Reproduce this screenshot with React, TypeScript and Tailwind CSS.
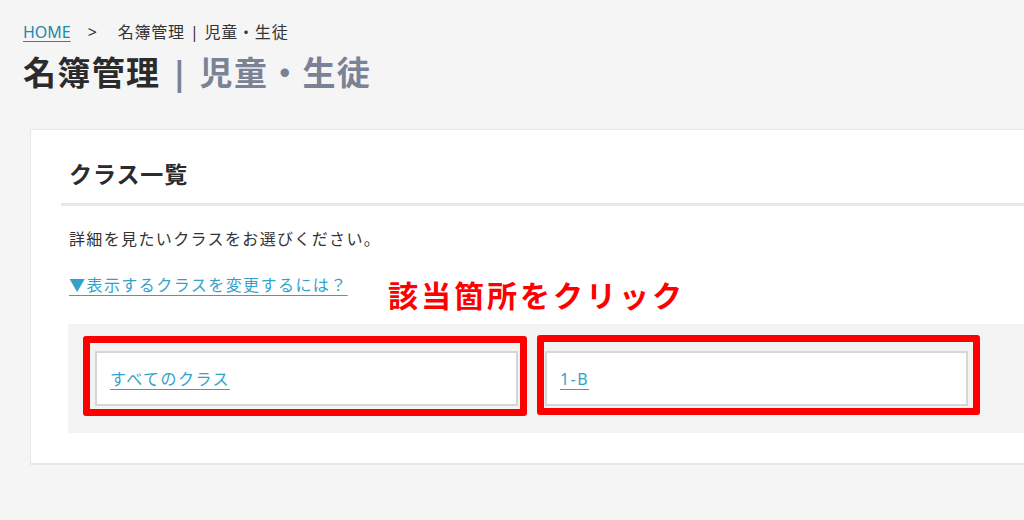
import React from "react";

const classes = ["すべてのクラス", "1-B"];

export default function App() {
    return (
        <div
            className="relative w-full h-[520px] overflow-hidden bg-[#f5f5f5] text-[#333]"
            style={{ fontFamily: '"Noto Sans", "Noto Sans CJK JP", sans-serif' }}
        >
            {/* breadcrumb + title */}
            <div className="pl-[23px] pt-[20px]">
                <div className="flex items-center text-[16px] leading-[24px] tracking-[0.05em]">
                    <a href="#" className="text-[#1c88ad] underline underline-offset-[3px] tracking-normal">HOME</a>
                    <span className="ml-[17px] text-[#333]">&gt;</span>
                    <span className="ml-[20px]">名簿管理 | 児童・生徒</span>
                </div>
                <h1 className="mt-[5px] text-[33px] leading-[48px] font-bold tracking-[0.04em] text-[#2b2b2b]">
                    名簿管理 <span className="text-[#7a8396]">| 児童・生徒</span>
                </h1>
            </div>

            {/* card */}
            <div className="mt-[32px] ml-[30px] w-[1060px] bg-white border border-[#e8e8ec] border-b-2 px-[30px] pt-[27px] pb-[30px]">
                <h2 className="pl-[8px] pb-[12px] border-b-[3px] border-[#e6e8ec] text-[23px] leading-[34px] font-bold tracking-[0.04em] text-[#2b2b2b]">
                    クラス一覧
                </h2>
                <p className="mt-[21px] pl-[8px] text-[16px] leading-[24px] tracking-[0.085em]">
                    詳細を見たいクラスをお選びください。
                </p>
                <div className="mt-[22px] pl-[8px]">
                    <a href="#" className="text-[16px] leading-[24px] text-[#34a2c8] underline underline-offset-[4px] tracking-[0.09em]">
                        ▼表示するクラスを変更するには？
                    </a>
                </div>
                <div className="mt-[27px] ml-[7px] bg-[#f3f3f3] p-[27px] flex gap-[27px]">
                    {classes.map((name) => (
                        <div key={name} className="w-[423px] h-[55px] bg-white border-2 border-[#d6d6d6] flex items-center pl-[13px]">
                            <a href="#" className="text-[16px] text-[#34a2c8] underline underline-offset-[4px] tracking-[0.09em]">
                                {name}
                            </a>
                        </div>
                    ))}
                </div>
            </div>

            {/* annotations */}
            <div className="absolute left-[388px] top-[279px] text-[30px] leading-[34px] font-bold tracking-[3px] text-[#ff0000]">
                該当箇所をクリック
            </div>
            <div className="absolute left-[83px] top-[336px] w-[444px] h-[80px] border-[7px] border-[#ff0000] rounded-[3px]" />
            <div className="absolute left-[537px] top-[335px] w-[443px] h-[80px] border-[7px] border-[#ff0000] rounded-[3px]" />
        </div>
    );
}
